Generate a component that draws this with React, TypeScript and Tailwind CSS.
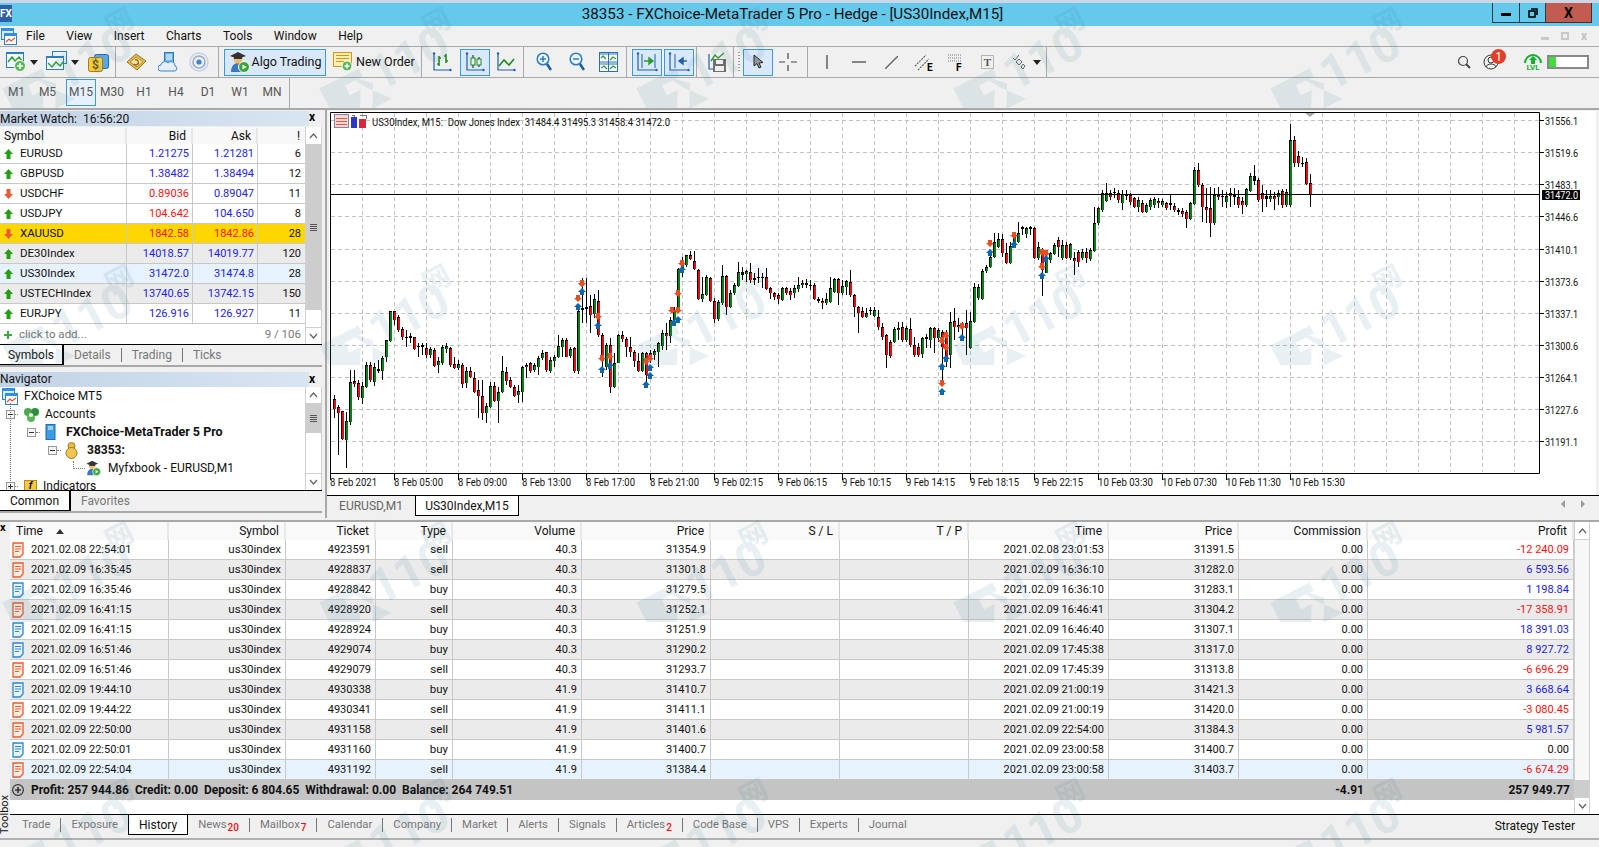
import React from 'react';

const FONT = { fontFamily: 'Roboto, "Liberation Sans", sans-serif' };

// candle data read off the chart: colour, body top, body bottom, wick top, wick bottom (3x px from y=110)
const CANDLES_A = `r868 898 855 925,r892 908 885 1035,r903 988 903 990,g933 990 905 1075,g817 935 780 945,r813 822 780 830,r820 860 810 870,g828 865 815 882,g765 830 755 835,r765 810 755 815,g770 815 760 828,d778 783 750 790,g743 782 738 810,g690 740 690 755,g604 692 602 695,r604 630 602 645,r622 660 615 665,r658 680 650 690,d680 684 660 710,d678 684 670 700,r682 716 680 720,d708 712 700 740,d706 710 700 735,r715 735 700 745,g716 735 710 745,r720 768 715 770,g754 765 740 790,g710 760 705 765,g708 718 700 730,r714 765 710 770,r762 775 742 778,g762 775 750 780,r765 822 760 835,g782 820 770 835,r782 800 770 805,r804 845 785 850,r841 858 810 925,r858 908 810 930,g888 910 880 938,g828 890 815 895,r828 872 815 875,g845 872 830 938,g784 845 738 850,r786 812 770 825,r810 830 800 835,r830 858 825 860,g844 854 825 878,g772 845 768 875,g765 772 760 805,r760 782 755 790,g765 780 758 785,g744 770 738 795,g730 745 720 750,r727 780 725 785,g750 782 740 788,g740 752 735 770,g708 740 675 745,g690 710 685 740,r690 740 685 742,g716 738 710 745,r715 782 712 790,g604 782 585 792,d595 600 505 640,d590 598 505 640,r588 616 555 668,g568 612 553 625,r574 676 540 680,r676 752 670 800,g705 770 700 780,r704 830 685 848,g760 830 730 835,g675 758 672 760,r676 686 662 695,r686 712 682 740,r712 726 682 740,r726 752 720 770,r752 782 730 785,g730 782 725 785,r730 795 725 830,r728 740 720 760,g724 734 718 750,g700 725 695 770,g668 708 660 720,r668 678 640 720,g630 678 620 700,g600 630 590 640,g478 600 475 610,g462 478 440 500,g436 466 434 470,r436 446 422 450,r454 476 422 480,r480 566 478 570,g552 566 500 575,g502 555 495 557,r505 572 500 575,r572 628 565 640,g577 628 570 632,g498 580 465 585,r498 590 495 615,g548 590 540 595,g524 550 520 555,g487 527 457 530,d487 494 470 510,g484 492 480 515,r487 510 460 520,d505 510 490 525,d502 505 475 520,d500 505 490 535,r502 537 475 540,r535 550 530 568,r550 560 545 570,r556 568 550 582,g535 570 530 572,r535 550 530 555,r543 554 535 570,g535 550 525 565,g526 536 500 545,g518 526 510 535,d518 524 508 535,d524 528 510 540,r526 568 520 570,d568 572 560 580,r573 580 565 597,g568 580 550 585`;
const CANDLES_B = `g535 575 500 580,g508 545 505 548,r508 550 505 585,g528 548 510 555,g514 530 510 555,r515 556 480 560,r556 592 552 620,r590 610 588 670,r603 620 590 625,g610 622 595 625,d600 604 590 615,g600 618 590 620,r622 652 600 660,r652 682 640 690,r675 735 672 775,r695 738 690 745,g656 695 650 700,g654 660 635 690,r650 690 635 695,g655 690 648 695,r658 705 625 710,r705 735 680 740,r710 735 700 742,g685 733 680 745,d680 686 672 715,g655 690 650 715,r655 685 650 730,g660 683 655 695,r665 710 660 820,r670 745 660 770,g635 735 605 775,r632 650 595 690,g645 650 625 665,d645 650 635 685,r640 655 600 735,g633 715 605 718,g530 635 520 640,g530 565 522 570,g482 568 478 570,g470 484 465 490,g442 470 420 475,g395 440 370 445,g388 410 370 415,r388 430 372 440,r430 458 400 462,g408 458 395 462,g380 410 372 412,g370 396 335 398,d352 356 348 375,g355 372 350 385,d352 356 348 375,r353 445 350 448,g412 445 395 450,r420 480 415 558,g445 488 430 490,g430 450 425 460,g405 432 400 435,r390 412 380 440,g405 445 390 450,r405 445 395 448,g402 445 398 450,r445 452 425 495,r427 455 420 472,g425 445 418 450,r425 445 415 460,g420 448 415 452,g340 422 290 425,g295 340 290 345,g250 300 240 305,g250 272 220 275,r248 260 240 270,d245 250 235 265,r250 270 240 280,g252 280 240 300,d255 258 240 270,r255 275 250 285,r265 290 260 295,g270 290 262 305,r278 305 270 310,g285 305 280 310,g270 290 265 300,g268 285 262 295,r272 280 265 295,g272 285 268 290,r280 295 275 300,d280 284 252 300,r288 300 280 305,d300 305 295 315,r302 312 295 320,r305 327 300 355,g280 326 275 330,g180 282 170 285,r180 225 160 230,r225 290 220 335,r290 300 235 340,r295 340 230 380,g255 340 235 345,r255 262 230 270,d258 262 240 290,g258 275 245 295,r250 258 235 290,d255 260 235 285,r260 285 240 295,r272 285 260 312,g237 285 235 290,g198 242 190 245,d198 212 165 225,r210 270 205 275,r248 268 225 305,d258 268 240 290,g258 268 240 275,r258 268 245 300,g250 262 240 285,r243 285 238 295,g245 285 238 290,g90 285 42 290,r90 160 78 170,r138 160 122 170,d158 162 140 172,r157 222 145 225,r220 252 192 292`;

function parseCandles(src: string, startX: number) {
  return src.split(',').map((s, i) => {
    const [a, b, c, d] = s.slice(1).split(' ').map(Number);
    return {
      x: startX + i * 4,
      kind: s[0],
      top: Math.round(110 + a / 3),
      bottom: Math.round(110 + b / 3),
      hi: Math.round(110 + c / 3),
      lo: Math.round(110 + d / 3),
    };
  });
}

const candles = [...parseCandles(CANDLES_A, 334), ...parseCandles(CANDLES_B, 830)];

const sellMarks = [[582, 283], [582, 283], [578, 298], [598, 316], [602, 358], [610, 356], [646, 361], [650, 358], [678, 293], [678, 310], [682, 263], [672, 310], [942, 383], [942, 340], [942, 340], [946, 335], [946, 347], [962, 326], [990, 243], [1014, 235], [1042, 252], [1046, 253], [1042, 266]];
const buyMarks = [[578, 307], [582, 292], [598, 326], [602, 370], [610, 366], [646, 385], [650, 376], [650, 368], [678, 320], [674, 323], [682, 270], [942, 392], [942, 367], [946, 359], [962, 338], [990, 253], [1014, 245], [1046, 259], [1042, 276]];

const priceLabels = [
  ['31556.1', 120.5], ['31519.6', 152.5], ['31483.1', 184.5], ['31446.6', 216.5], ['31410.1', 249.5], ['31373.6', 281.5],
  ['31337.1', 313.5], ['31300.6', 345.5], ['31264.1', 377.5], ['31227.6', 409.5], ['31191.1', 441.5],
] as const;

const timeLabels = [
  ['8 Feb 2021', 330, 47], ['8 Feb 05:00', 394, 49], ['8 Feb 09:00', 458, 49], ['8 Feb 13:00', 522, 49], ['8 Feb 17:00', 586, 49], ['8 Feb 21:00', 650, 49],
  ['9 Feb 02:15', 714, 49], ['9 Feb 06:15', 778, 49], ['9 Feb 10:15', 842, 49], ['9 Feb 14:15', 906, 49], ['9 Feb 18:15', 970, 49], ['9 Feb 22:15', 1034, 49],
  ['10 Feb 03:30', 1098, 55], ['10 Feb 07:30', 1162, 55], ['10 Feb 11:30', 1226, 55], ['10 Feb 15:30', 1290, 55],
] as const;

const vGrid = Array.from({ length: 38 }, (_, i) => 362.5 + i * 32);

const marketRows = [
  { s: 'EURUSD', b: '1.21275', a: '1.21281', n: '6', up: true, bc: 'text-[#2222ee]', ac: 'text-[#2222ee]', bg: 'bg-white' },
  { s: 'GBPUSD', b: '1.38482', a: '1.38494', n: '12', up: true, bc: 'text-[#2222ee]', ac: 'text-[#2222ee]', bg: 'bg-white' },
  { s: 'USDCHF', b: '0.89036', a: '0.89047', n: '11', up: false, bc: 'text-[#ff1111]', ac: 'text-[#2222ee]', bg: 'bg-white' },
  { s: 'USDJPY', b: '104.642', a: '104.650', n: '8', up: true, bc: 'text-[#ff1111]', ac: 'text-[#2222ee]', bg: 'bg-white' },
  { s: 'XAUUSD', b: '1842.58', a: '1842.86', n: '28', up: false, bc: 'text-[#ff1111]', ac: 'text-[#ff1111]', bg: 'bg-[#ffd700]' },
  { s: 'DE30Index', b: '14018.57', a: '14019.77', n: '120', up: true, bc: 'text-[#2222ee]', ac: 'text-[#2222ee]', bg: 'bg-[#ebebeb]' },
  { s: 'US30Index', b: '31472.0', a: '31474.8', n: '28', up: true, bc: 'text-[#2222ee]', ac: 'text-[#2222ee]', bg: 'bg-[#e6f2fd]' },
  { s: 'USTECHIndex', b: '13740.65', a: '13742.15', n: '150', up: true, bc: 'text-[#2222ee]', ac: 'text-[#2222ee]', bg: 'bg-[#ebebeb]' },
  { s: 'EURJPY', b: '126.916', a: '126.927', n: '11', up: true, bc: 'text-[#2222ee]', ac: 'text-[#2222ee]', bg: 'bg-white' },
];

const historyRows = [
  ['2021.02.08 22:54:01', '4923591', 'sell', '40.3', '31354.9', '2021.02.08 23:01:53', '31391.5', '-12 240.09'],
  ['2021.02.09 16:35:45', '4928837', 'sell', '40.3', '31301.8', '2021.02.09 16:36:10', '31282.0', '6 593.56'],
  ['2021.02.09 16:35:46', '4928842', 'buy', '40.3', '31279.5', '2021.02.09 16:36:10', '31283.1', '1 198.84'],
  ['2021.02.09 16:41:15', '4928920', 'sell', '40.3', '31252.1', '2021.02.09 16:46:41', '31304.2', '-17 358.91'],
  ['2021.02.09 16:41:15', '4928924', 'buy', '40.3', '31251.9', '2021.02.09 16:46:40', '31307.1', '18 391.03'],
  ['2021.02.09 16:51:46', '4929074', 'buy', '40.3', '31290.2', '2021.02.09 17:45:38', '31317.0', '8 927.72'],
  ['2021.02.09 16:51:46', '4929079', 'sell', '40.3', '31293.7', '2021.02.09 17:45:39', '31313.8', '-6 696.29'],
  ['2021.02.09 19:44:10', '4930338', 'buy', '41.9', '31410.7', '2021.02.09 21:00:19', '31421.3', '3 668.64'],
  ['2021.02.09 19:44:22', '4930341', 'sell', '41.9', '31411.1', '2021.02.09 21:00:19', '31420.0', '-3 080.45'],
  ['2021.02.09 22:50:00', '4931158', 'sell', '41.9', '31401.6', '2021.02.09 22:54:00', '31384.3', '5 981.57'],
  ['2021.02.09 22:50:01', '4931160', 'buy', '41.9', '31400.7', '2021.02.09 23:00:58', '31400.7', '0.00'],
  ['2021.02.09 22:54:04', '4931192', 'sell', '41.9', '31384.4', '2021.02.09 23:00:58', '31403.7', '-6 674.29'],
];

const toolboxTabs = [
  { t: 'Trade' }, { t: 'Exposure', noSep: true }, { t: 'History', active: true }, { t: 'News', sup: '20' }, { t: 'Mailbox', sup: '7' },
  { t: 'Calendar' }, { t: 'Company' }, { t: 'Market' }, { t: 'Alerts' }, { t: 'Signals' }, { t: 'Articles', sup: '2' },
  { t: 'Code Base' }, { t: 'VPS' }, { t: 'Experts' }, { t: 'Journal', noSep: true },
];

const COLS = 'grid grid-cols-[159px_117px_90px_77px_129px_129px_129px_129px_140px_130px_129px_206px]';

function Watermark() {
  return (
    <svg width="140" height="104" viewBox="0 0 140 104" className="opacity-[0.11]">
      <g transform="translate(0 8) rotate(-27 70 50)" fill="#3f7f97">
        <path d="M-4 42 L40 42 L40 51 L20 51 L20 62 L32 62 L20 84 L-4 84 Z" />
        <path d="M26 42 L46 62 L34 84 L56 84 L38 62 Z" />
        <text x="48" y="72" fontSize="48" fontWeight="700" fontFamily="Roboto, sans-serif">110</text>
        <text x="116" y="46" fontSize="28" fontWeight="700" fontFamily='"Noto Sans CJK SC", sans-serif'>网</text>
      </g>
    </svg>
  );
}

function ArrowDot({ up }: { up: boolean }) {
  return (
    <svg className="shrink-0" width="9" height="10" viewBox="0 0 9 10">
      {up ? (
        <path d="M4.5 0 L9 5 L6.5 5 L6.5 10 L2.5 10 L2.5 5 L0 5 Z" fill="#22a010" />
      ) : (
        <path d="M4.5 10 L9 5 L6.5 5 L6.5 0 L2.5 0 L2.5 5 L0 5 Z" fill="#ea5a32" />
      )}
    </svg>
  );
}

function Chevron({ up }: { up: boolean }) {
  return (
    <svg width="9" height="6" viewBox="0 0 9 6" fill="none" stroke="#606060" strokeWidth="1.2">
      <path d={up ? 'M1 5 L4.5 1 L8 5' : 'M1 1 L4.5 5 L8 1'} />
    </svg>
  );
}

function CloseX() {
  return <span className="text-[12px] font-bold leading-none text-black">x</span>;
}

function Grip() {
  return (
    <span className="flex flex-col gap-[1px]">
      <span className="h-[1px] w-[7px] bg-[#555]" />
      <span className="h-[1px] w-[7px] bg-[#555]" />
      <span className="h-[1px] w-[7px] bg-[#555]" />
      <span className="h-[1px] w-[7px] bg-[#555]" />
    </span>
  );
}

function WindowIcon() {
  return (
    <svg className="shrink-0" width="16" height="17" viewBox="0 0 16 17">
      <rect x="0.5" y="0.5" width="12" height="11" fill="#d9ecfb" stroke="#2f7fc8" />
      <rect x="0" y="0" width="13" height="3" fill="#2f8fe0" />
      <rect x="3.5" y="5.5" width="12" height="11" fill="#fff" stroke="#2f7fc8" />
      <rect x="3" y="5" width="13" height="3" fill="#2f8fe0" />
      <path d="M5 14 L8 11 L10 13 L14 10" fill="none" stroke="#e0503a" strokeWidth="1.2" />
    </svg>
  );
}

function NewChartIcon({ double }: { double?: boolean }) {
  return (
    <svg width="22" height="22" viewBox="0 0 22 22">
      {double && <rect x="6.5" y="0.5" width="14" height="12" fill="#e8f3fc" stroke="#2b7cc0" />}
      <rect x="0.5" y={double ? 5.5 : 1.5} width="17" height={double ? 13 : 15} fill="#f4f9fd" stroke="#2b7cc0" />
      <rect x="0" y={double ? 5 : 1} width="18" height="2" fill="#2b7cc0" />
      <path d={double ? 'M2 12 L6 16 L10 11 L14 15 L17 11' : 'M2 11 L6 6 L9 10 L13 6 L16 10'} fill="none" stroke="#2e9b2e" strokeWidth="1.4" />
      {!double && <circle cx="14" cy="15" r="5.5" fill="#55b755" stroke="#fff" />}
      {!double && <path d="M14 12 V18 M11 15 H17" stroke="#fff" strokeWidth="1.6" />}
    </svg>
  );
}

function GoldIcon() {
  return (
    <svg width="21" height="20" viewBox="0 0 21 20">
      <rect x="6.5" y="2.5" width="14" height="14" rx="2" fill="#5aa7e8" stroke="#2169b0" />
      <rect x="0.5" y="5.5" width="14" height="14" rx="2" fill="#f6cd3c" stroke="#a67a10" />
      <text x="7.5" y="17" textAnchor="middle" fontSize="12" fontWeight="700" fill="#7a5a08">$</text>
    </svg>
  );
}

function FolderGoldIcon() {
  return (
    <svg width="21" height="20" viewBox="0 0 21 20">
      <path d="M1 10 L10 2 L20 9 L11 18 Z" fill="#e5bb55" stroke="#9a7520" />
      <path d="M4 10 L10 5 L17 9.5 L11 15 Z" fill="#f5e0a0" stroke="#b28a28" />
      <path d="M9 8 A2.5 2.5 0 1 1 8 12" fill="none" stroke="#8a6a18" strokeWidth="1.3" />
    </svg>
  );
}

function CloudIcon() {
  return (
    <svg width="20" height="20" viewBox="0 0 20 20">
      <rect x="6.5" y="0.5" width="9" height="11" fill="#6bb2ea" stroke="#2a78c0" />
      <path d="M8 3 H14 M8 5 H14 M8 7 H14" stroke="#fff" />
      <path d="M3 19 A3 3 0 0 1 3 13 A4 4 0 0 1 10 11 A4 4 0 0 1 17 14 A2.6 2.6 0 0 1 17 19 Z" fill="#e3f0fb" stroke="#3f87c8" />
    </svg>
  );
}

function SignalIcon() {
  return (
    <svg width="20" height="20" viewBox="0 0 20 20" fill="none">
      <circle cx="10" cy="10" r="9" stroke="#c5d3e6" strokeWidth="1.5" />
      <circle cx="10" cy="10" r="6" stroke="#8fa9cf" strokeWidth="1.5" />
      <circle cx="10" cy="10" r="2.6" fill="#3f7fd0" />
    </svg>
  );
}

function AlgoIcon({ small }: { small?: boolean }) {
  const size = small ? 16 : 22;
  return (
    <svg className="shrink-0" width={size} height={size} viewBox="0 0 22 22">
      <path d="M3 21 C3 14 7 12 10 12 C14 12 17 14 17 21 Z" fill="#3f78c2" />
      <circle cx="10" cy="8" r="4.5" fill="#f0b96f" />
      <path d="M2 5 L10 1 L18 5 L10 8 Z" fill="#333" />
      <path d="M6 6 H14 V8 H6 Z" fill="#333" />
      <circle cx="16" cy="16" r="5.5" fill="#3aa63a" stroke="#fff" />
      <path d="M14.5 13.5 L18.5 16 L14.5 18.5 Z" fill="#fff" />
    </svg>
  );
}

function NewOrderIcon() {
  return (
    <svg className="shrink-0" width="20" height="20" viewBox="0 0 20 20">
      <rect x="0.5" y="0.5" width="18" height="14" fill="#fbeeb0" stroke="#c99a1c" />
      <path d="M3 3.5 H16 M3 6.5 H16 M3 9.5 H12" stroke="#c99a1c" />
      <circle cx="14" cy="14" r="5" fill="#57b757" stroke="#fff" />
      <path d="M14 11.5 V16.5 M11.5 14 H16.5" stroke="#fff" strokeWidth="1.5" />
    </svg>
  );
}

function Axes({ children, w = 20 }: { children?: React.ReactNode; w?: number }) {
  return (
    <svg width={w} height="20" viewBox={`0 0 ${w} 20`}>
      <path d={`M2 1 V18 H${w - 1}`} fill="none" stroke="#1f5fb0" strokeWidth="1.2" />
      <circle cx="2" cy="1.5" r="1.2" fill="#1f5fb0" />
      <circle cx={w - 1.5} cy="18" r="1.2" fill="#1f5fb0" />
      {children}
    </svg>
  );
}

function MagnifierIcon({ plus }: { plus?: boolean }) {
  return (
    <svg width="16" height="20" viewBox="0 0 16 20">
      <circle cx="7" cy="7" r="5.8" fill="#eef6fd" stroke="#2a7cc4" strokeWidth="1.5" />
      <path d="M4 7 H10" stroke="#2a7cc4" strokeWidth="1.5" />
      {plus && <path d="M7 4 V10" stroke="#2a7cc4" strokeWidth="1.5" />}
      <path d="M11 12 L15 18" stroke="#1d5d9a" strokeWidth="2.6" />
    </svg>
  );
}

function TilesIcon() {
  return (
    <svg width="19" height="20" viewBox="0 0 19 20">
      <rect x="0.5" y="0.5" width="18" height="19" fill="#fff" stroke="#2a6fb5" />
      <path d="M0 2 H19 M0 10 H19 M0 12 H19 M9.5 0 V20" stroke="#2a6fb5" />
      <path d="M2 6 L4 4 L7 7 M11 8 L14 5 L17 7 M2 16 L5 14 L8 17 M11 17 L14 14 L17 16" fill="none" stroke="#2e9b2e" strokeWidth="1.3" />
    </svg>
  );
}

function ToolbarSep() {
  return <span className="mx-[4px] h-[30px] w-[1px] bg-[#a8a8a8]" />;
}

function SelBtn({ children, w }: { children: React.ReactNode; w: string }) {
  return (
    <span className={`flex h-[27px] items-center justify-center border border-[#3a9bd9] bg-[#d9e9fb] ${w}`}>{children}</span>
  );
}

function Caret() {
  return <span className="block h-0 w-0 border-x-[4px] border-t-[5px] border-x-transparent border-t-[#222]" />;
}

function Toolbar() {
  return (
    <div className="flex h-[32px] shrink-0 items-center border-y border-[#a8a8a8] bg-[#f0f0f0]">
      <div className="flex h-full w-[1047px] shrink-0 items-center border-r border-[#a8a8a8] [&>*]:shrink-0">
        <span className="ml-[6px] w-[24px]"><NewChartIcon /></span>
        <span className="w-[16px]"><Caret /></span>
        <span className="w-[25px]"><NewChartIcon double /></span>
        <span className="w-[17px]"><Caret /></span>
        <span className="w-[23px]"><GoldIcon /></span>
        <ToolbarSep />
        <span className="ml-[6px] flex w-[88px] items-center gap-[11px]"><FolderGoldIcon /><CloudIcon /><SignalIcon /></span>
        <ToolbarSep />
        <SelBtn w="w-[102px] gap-[1px] ml-[1px]"><AlgoIcon /><span className="whitespace-nowrap text-[12.5px] text-[#111]">Algo Trading</span></SelBtn>
        <span className="ml-[7px] flex w-[84px] items-center gap-[3px]"><NewOrderIcon /><span className="whitespace-nowrap text-[12.5px] text-[#111]">New Order</span></span>
        <ToolbarSep />
        <span className="ml-[6px] w-[28px]">
          <Axes><path d="M7 4 V14 M5 12 H7 M7 6 H9 M14 2 V11 M12 4 H14 M14 9 H16" fill="none" stroke="#1e8c1e" strokeWidth="1.6" /></Axes>
        </span>
        <SelBtn w="w-[30px]">
          <Axes><path d="M8 3 V16 M14 5 V15" stroke="#111" /><rect x="6" y="6" width="4" height="7" fill="#e9f4ea" stroke="#1e8c1e" /><rect x="12" y="7" width="4" height="6" fill="#e9f4ea" stroke="#1e8c1e" /></Axes>
        </SelBtn>
        <span className="ml-[6px] w-[23px]">
          <Axes><path d="M3 14 L8 8 L13 13 L18 7" fill="none" stroke="#1e8c1e" strokeWidth="1.6" /></Axes>
        </span>
        <ToolbarSep />
        <span className="ml-[8px] w-[33px]"><MagnifierIcon plus /></span>
        <span className="w-[30px]"><MagnifierIcon /></span>
        <span className="w-[23px]"><TilesIcon /></span>
        <ToolbarSep />
        <SelBtn w="w-[30px] ml-[1px]">
          <Axes w={22}><path d="M6 2 V16 M19 2 V16" stroke="#1f5fb0" /><path d="M8 9 H14 M13 6 V12 L17 9 Z" fill="#2e9b2e" stroke="#2e9b2e" strokeWidth="1.4" /></Axes>
        </SelBtn>
        <span className="w-[2px]" />
        <SelBtn w="w-[30px]">
          <Axes w={22}><path d="M7 2 V16" stroke="#1f5fb0" /><path d="M19 9 H15 M15 6 V12 L11 9 Z" fill="#1f5fb0" stroke="#1f5fb0" strokeWidth="1.4" /></Axes>
        </SelBtn>
        <span className="mx-[2px] h-[30px] w-[1px] bg-[#a8a8a8]" />
        <span className="ml-[8px] w-[22px]">
          <svg width="19" height="20" viewBox="0 0 19 20">
            <path d="M2 2 V17 H11" fill="none" stroke="#1f5fb0" strokeWidth="1.2" />
            <path d="M4 9 L8 3 L11 6 L17 1" fill="none" stroke="#2e9b2e" strokeWidth="1.4" />
            <rect x="6" y="7" width="13" height="13" fill="#6e6e6e" />
            <rect x="9" y="8" width="7" height="4" fill="#eee" />
            <rect x="8" y="14" width="9" height="5" fill="#eee" />
          </svg>
        </span>
        <ToolbarSep />
        <span className="mr-[1px] h-[20px] w-[2px] bg-[repeating-linear-gradient(#999_0_1px,transparent_1px_3px)]" />
        <SelBtn w="w-[30px] ml-[2px]">
          <svg width="12" height="16" viewBox="0 0 12 16"><path d="M2 1 L2 12 L5 9.5 L7 14 L9 13 L7 9 L11 8.5 Z" fill="#9a9a9a" stroke="#222" /></svg>
        </SelBtn>
        <span className="ml-[6px] w-[24px]">
          <svg width="18" height="18" viewBox="0 0 18 18"><path d="M9 0 V6 M9 12 V18 M0 9 H6 M12 9 H18" stroke="#444" strokeWidth="1.2" /></svg>
        </span>
        <ToolbarSep />
        <span className="ml-[14px] w-[26px]"><svg width="2" height="14"><path d="M1 0 V14" stroke="#555" strokeWidth="1.4" /></svg></span>
        <span className="w-[33px]"><svg width="14" height="2"><path d="M0 1 H14" stroke="#555" strokeWidth="1.4" /></svg></span>
        <span className="w-[29px]"><svg width="13" height="13"><path d="M0 13 L13 0" stroke="#666" strokeWidth="1.4" /></svg></span>
        <span className="w-[34px]">
          <svg width="19" height="20" viewBox="0 0 19 20">
            <path d="M1 14 L12 3 M4 18 L15 7" stroke="#666" strokeWidth="1.2" strokeDasharray="2 1" fill="none" />
            <text x="13" y="19" fontSize="10" fontWeight="700" fill="#000">E</text>
          </svg>
        </span>
        <span className="w-[33px]">
          <svg width="15" height="20" viewBox="0 0 15 20">
            <path d="M0 3 H13 M0 6 H13 M0 9 H13" stroke="#777" strokeDasharray="1 1" />
            <text x="8" y="19" fontSize="10" fontWeight="700" fill="#000">F</text>
          </svg>
        </span>
        <span className="w-[31px]">
          <svg width="13" height="14" viewBox="0 0 13 14">
            <rect x="0.5" y="0.5" width="12" height="13" fill="none" stroke="#777" strokeDasharray="1 1" />
            <text x="6.5" y="11" textAnchor="middle" fontSize="11" fontWeight="700" fill="#555" fontFamily="Liberation Serif, serif">T</text>
          </svg>
        </span>
        <span className="w-[21px]">
          <svg width="14" height="16" viewBox="0 0 14 16" fill="none" stroke="#666">
            <path d="M1 4 L3 6 L7 1" />
            <path d="M4 8 L7 11 L10 8 L7 5 Z" />
            <path d="M9 13 L11 15 L13 12 L11 10 Z" />
          </svg>
        </span>
        <Caret />
      </div>
      <div className="flex flex-1 items-center">
        <span className="ml-[410px] w-[26px]">
          <svg width="14" height="14" viewBox="0 0 14 14" fill="none" stroke="#444"><circle cx="6" cy="6" r="4.5" strokeWidth="1.2" /><path d="M9 9 L13 13" strokeWidth="2" /></svg>
        </span>
        <span className="relative w-[36px]">
          <svg width="16" height="16" viewBox="0 0 16 16" fill="none" stroke="#333"><circle cx="8" cy="8" r="7" /><circle cx="8" cy="6" r="3" /><path d="M3 13 C4 9 12 9 13 13" /></svg>
          <span className="absolute left-[8px] top-[-5px] flex h-[15px] w-[15px] items-center justify-center rounded-full bg-[#e43d28] text-[12px] text-white">1</span>
        </span>
        <span className="flex w-[28px] flex-col items-center leading-none">
          <svg width="18" height="11" viewBox="0 0 18 11"><path d="M1 10 A8 8 0 0 1 17 10" fill="none" stroke="#15b030" strokeWidth="2" /><path d="M9 3 L13 7 H11 V11 H7 V7 H5 Z" fill="#15b030" /></svg>
          <span className="text-[8px] font-bold text-[#15b030]">LVL</span>
        </span>
        <span className="flex h-[14px] w-[42px] border-2 border-[#888] bg-white">
          <span className="w-[7px] bg-[#42dc3c]" />
        </span>
      </div>
    </div>
  );
}

function MarketWatch() {
  return (
    <div className="flex h-[257px] shrink-0 flex-col border-b-2 border-[#a8a8a8]">
      <div className="flex h-[17px] shrink-0 items-start pt-[1px]">
        <div className="flex h-[15px] w-[309px] items-center bg-gradient-to-r from-[#c2d3e6] to-[#d8e5f2] text-[12px] leading-none text-[#111]">Market Watch:&nbsp; 16:56:20</div>
        <span className="flex flex-1 justify-center pr-[7px]"><CloseX /></span>
      </div>
      <div className="flex h-[217px] shrink-0">
        <div className="w-[305px] bg-white">
          <div className="grid h-[17px] grid-cols-[127px_66px_65px_47px] items-center bg-[#f8f8f8] text-[12px] leading-[16px] text-[#111]">
            <span className="pl-[4px] border-r-2 border-[#e8e8e8]">Symbol</span>
            <span className="pr-[5px] text-right border-r-2 border-[#e8e8e8]">Bid</span>
            <span className="pr-[5px] text-right border-r-2 border-[#e8e8e8]">Ask</span>
            <span className="pr-[5px] text-right">!</span>
          </div>
          {marketRows.map((r) => (
            <div key={r.s} className={`grid h-[20px] grid-cols-[127px_66px_65px_47px] items-center border-b border-[#c8c8c8] text-[11px] ${r.bg}`}>
              <span className="flex h-full items-center gap-[7px] border-r border-[#c8c8c8] pl-[4px] pt-[1px] text-[11.5px] text-[#111]"><ArrowDot up={r.up} />{r.s}</span>
              <span className={`flex h-full items-center justify-end border-r border-[#c8c8c8] pr-[3px] pt-[2px] ${r.bc}`}>{r.b}</span>
              <span className={`flex h-full items-center justify-end border-r border-[#c8c8c8] pr-[3px] pt-[2px] ${r.ac}`}>{r.a}</span>
              <span className="pr-[4px] pt-[2px] text-right text-[#111]">{r.n}</span>
            </div>
          ))}
          <div className="flex h-[20px] items-center justify-between px-[4px] pt-[1px] text-[11.5px] text-[#777]">
            <span className="flex items-center gap-[7px]">
              <svg width="8" height="8" viewBox="0 0 8 8"><path d="M4 0 V8 M0 4 H8" stroke="#3aa83a" strokeWidth="2" /></svg>
              click to add...
            </span>
            <span>9 / 106</span>
          </div>
        </div>
        <div className="flex w-[17px] flex-col bg-white border-x border-[#d0d0d0]">
          <span className="flex h-[17px] items-center justify-center"><Chevron up /></span>
          <span className="flex h-[166px] items-center justify-center bg-[#cdcdcd]"><Grip /></span>
          <span className="flex-1" />
          <span className="flex h-[17px] items-center justify-center border-t border-[#d0d0d0]"><Chevron up={false} /></span>
        </div>
      </div>
      <div className="flex h-[21px] w-[322px] shrink-0 items-start border-t border-black bg-[#f0f0f0] text-[12px] text-[#777]">
        <span className="flex h-[20px] w-[64px] items-center justify-center border-b border-r-2 border-black bg-white text-[#111]">Symbols</span>
        <span className="mt-[3px] border-r border-[#777] px-[10px] leading-[14px]">Details</span>
        <span className="mt-[3px] border-r border-[#777] px-[10px] leading-[14px]">Trading</span>
        <span className="mt-[3px] px-[10px] leading-[14px]">Ticks</span>
      </div>
    </div>
  );
}

function TreeBox({ plus }: { plus?: boolean }) {
  return (
    <span className="flex h-[9px] w-[9px] shrink-0 items-center justify-center border border-[#999] bg-[#f4f4f4]">
      <span className="relative h-[1px] w-[5px] bg-[#333]">
        {plus && <span className="absolute left-[2px] top-[-2px] h-[5px] w-[1px] bg-[#333]" />}
      </span>
    </span>
  );
}

function Dots({ w }: { w: string }) {
  return <span className={`h-0 border-t border-dotted border-[#777] ${w}`} />;
}

function Navigator() {
  return (
    <div className="mt-[4px] flex h-[142px] shrink-0 flex-col border-b-2 border-[#a8a8a8]">
      <div className="flex h-[16px] shrink-0 items-center">
        <div className="flex h-[15px] w-[309px] items-center bg-gradient-to-r from-[#c2d3e6] to-[#d8e5f2] text-[12px] leading-none text-[#111]">Navigator</div>
        <span className="flex flex-1 justify-center pr-[7px]"><CloseX /></span>
      </div>
      <div className="flex h-[103px] shrink-0">
        <div className="relative w-[305px] overflow-hidden bg-white text-[12px] leading-[18px] text-[#111]">
          <span className="absolute left-[10px] top-[16px] h-[80px] border-l border-dotted border-[#777]" />
          <div className="flex h-[18px] items-center gap-[6px] pl-[2px]"><WindowIcon />FXChoice MT5</div>
          <div className="flex h-[18px] items-center pl-[6px]">
            <TreeBox /><Dots w="w-[3px]" />
            <svg className="mx-[5px]" width="17" height="15" viewBox="0 0 17 15"><circle cx="5" cy="5" r="4" fill="#4aa94a" /><circle cx="12" cy="5" r="4" fill="#2e8f3a" /><circle cx="8" cy="11" r="4" fill="#58b858" /><circle cx="8" cy="8" r="2" fill="#fff" /></svg>
            Accounts
          </div>
          <div className="flex h-[18px] items-center pl-[27px] text-[12.5px] font-bold">
            <TreeBox /><Dots w="w-[4px]" />
            <svg className="mx-[4px] shrink-0" width="13" height="16" viewBox="0 0 13 16"><rect x="2" y="0.5" width="9" height="15" fill="#3d9be5" stroke="#1e6fb5" /><path d="M4 3 H9 M4 5 H9" stroke="#fff" /></svg>
            <span className="pl-[5px]">FXChoice-MetaTrader 5 Pro</span>
          </div>
          <div className="flex h-[18px] items-center pl-[48px] font-bold">
            <TreeBox /><Dots w="w-[4px]" />
            <svg className="mx-[3px] shrink-0" width="15" height="17" viewBox="0 0 15 17"><circle cx="7.5" cy="4" r="3.5" fill="#e8bd48" stroke="#a07a18" /><circle cx="7.5" cy="11" r="5.5" fill="#eec655" stroke="#a07a18" /></svg>
            <span className="pl-[5px]">38353:</span>
          </div>
          <div className="flex h-[18px] items-center pl-[73px]">
            <span className="mb-[6px] h-[8px] w-[12px] border-b border-l border-dotted border-[#777]" />
            <AlgoIcon small />
            <span className="pl-[7px]">Myfxbook - EURUSD,M1</span>
          </div>
          <div className="flex h-[18px] items-center pl-[6px]">
            <TreeBox plus /><Dots w="w-[3px]" />
            <span className="mx-[6px] flex h-[13px] w-[13px] items-center justify-center border border-[#b98a18] bg-[#f3c93e] text-[10px] italic font-bold">f</span>
            Indicators
          </div>
        </div>
        <div className="flex w-[17px] flex-col border-x border-[#d0d0d0] bg-white">
          <span className="flex h-[17px] items-center justify-center border-b border-[#d0d0d0]"><Chevron up /></span>
          <span className="flex h-[29px] items-center justify-center bg-[#cdcdcd]"><Grip /></span>
          <span className="flex-1" />
          <span className="flex h-[17px] items-center justify-center border-t border-[#d0d0d0]"><Chevron up={false} /></span>
        </div>
      </div>
      <div className="flex h-[21px] w-[322px] shrink-0 items-start border-t border-black bg-[#f0f0f0] text-[12px] text-[#777]">
        <span className="flex h-[20px] w-[71px] items-center justify-center border-b border-r-2 border-black bg-white text-[#111]">Common</span>
        <span className="mt-[3px] px-[10px] leading-[14px]">Favorites</span>
      </div>
    </div>
  );
}

function Chart() {
  return (
    <svg className="block h-[385px] w-[1272px] shrink-0" viewBox="327 110 1272 385" fontFamily="Roboto, sans-serif">
      <rect x="327" y="110" width="1272" height="385" fill="#f0f0f0" />
      <rect x="329" y="111" width="1267" height="384" fill="#fff" />
      {priceLabels.map(([, y]) => (
        <path key={y} d={`M331 ${y} H1539`} stroke="#c2c2c2" strokeDasharray="4 3" />
      ))}
      {vGrid.filter((x) => x < 1539).map((x) => (
        <path key={x} d={`M${x} 113 V472`} stroke="#c2c2c2" strokeDasharray="4 3" />
      ))}
      <path d="M330.5 112.5 H1539.5 V473.5 H330.5 Z" fill="none" stroke="#000" />
      <path d="M1305 113 H1315 L1310 117 Z" fill="#a8a8a8" />
      {candles.map((c) => (
        <g key={c.x} shapeRendering="crispEdges">
          <rect x={c.x} y={c.hi} width="1" height={Math.max(1, c.lo - c.hi)} fill="#000" />
          {c.kind === 'd' ? (
            <rect x={c.x - 1} y={c.top} width="3" height={Math.max(1, c.bottom - c.top)} fill="#000" />
          ) : (
            <>
              <rect x={c.x - 1} y={c.top} width="3" height={Math.max(2, c.bottom - c.top)} fill="#000" />
              <rect x={c.x} y={c.top + 1} width="2" height={Math.max(1, c.bottom - c.top - 1)} fill={c.kind === 'g' ? '#0a7f12' : '#e60d0d'} />
            </>
          )}
        </g>
      ))}
      {sellMarks.map(([x, y], i) => (
        <path key={`s${i}`} d={`M${x} ${y + 4} L${x - 4} ${y} H${x - 2} V${y - 3} H${x + 2} V${y} H${x + 4} Z`} fill="#e84e22" />
      ))}
      {buyMarks.map(([x, y], i) => (
        <path key={`b${i}`} d={`M${x} ${y - 4} L${x - 4} ${y} H${x - 2} V${y + 3} H${x + 2} V${y} H${x + 4} Z`} fill="#0a66b0" />
      ))}
      <path d="M331 194.5 H1539" stroke="#000" />
      {priceLabels.map(([t, y]) => (
        <g key={t}>
          <path d={`M1539 ${y} H1544`} stroke="#000" />
          <text x="1545" y={y + 4} fontSize="11" fill="#111" textLength="33" lengthAdjust="spacingAndGlyphs">{t}</text>
        </g>
      ))}
      <path d="M1542 190 H1580 V200 H1542 Z" fill="#000" />
      <text x="1545" y="199" fontSize="11" fill="#fff" textLength="33" lengthAdjust="spacingAndGlyphs">31472.0</text>
      {timeLabels.map(([t, x, w]) => (
        <g key={t}>
          <path d={`M${x + 0.5} 473 V480`} stroke="#000" />
          <text x={x} y="486" fontSize="11" fill="#111" textLength={w} lengthAdjust="spacingAndGlyphs">{t}</text>
        </g>
      ))}
      <g shapeRendering="crispEdges">
        <rect x="334.5" y="114.5" width="14" height="13" fill="#f5d6d2" stroke="#8a7faa" />
        <path d="M336 118 H347 M336 121 H347 M336 124 H347" stroke="#e05a48" />
        <rect x="351" y="117" width="6" height="11" fill="#2a36c4" />
        <rect x="359" y="119" width="7" height="9" fill="#d6283a" />
        <path d="M352 115 H354 V117 M360 115 H366 V119" stroke="#777" fill="none" />
      </g>
      <text x="372" y="126" fontSize="11" fill="#111" xmlSpace="preserve" textLength="298" lengthAdjust="spacingAndGlyphs">US30Index, M15:  Dow Jones Index  31484.4 31495.3 31458.4 31472.0</text>
    </svg>
  );
}

function DocIcon({ sell }: { sell: boolean }) {
  const stroke = sell ? '#ee5a2a' : '#2a86cf';
  return (
    <svg className="shrink-0" width="12" height="16" viewBox="0 0 12 16">
      <path d="M1 1 H11 V12 L8 15 H1 Z" fill={sell ? '#fdeee6' : '#e8f3fc'} stroke={stroke} strokeWidth="1.3" />
      <path d="M3 4.5 H9 M3 7 H9 M3 9.5 H7" stroke={stroke} strokeWidth="1.2" />
    </svg>
  );
}

function HistoryTable() {
  const head = ['Symbol', 'Ticket', 'Type', 'Volume', 'Price', 'S / L', 'T / P', 'Time', 'Price', 'Commission', 'Profit'];
  return (
    <div className="flex min-w-0 flex-1 flex-col">
      <div className="flex h-[292px] shrink-0">
        <div className="w-[1564px] text-[11px]">
          <div className={`${COLS} h-[18px] items-center bg-[#f9f9f9] text-[12px] text-[#111]`}>
            <span className="flex items-center gap-[13px] border-r-2 border-[#e8e8e8] pl-[6px]">Time
              <span className="h-0 w-0 border-x-[4px] border-b-[5px] border-x-transparent border-b-[#333]" />
            </span>
            {head.map((h, i) => (
              <span key={i} className="border-r-2 border-[#e8e8e8] pr-[5px] text-right">{h}</span>
            ))}
          </div>
          {historyRows.map((r, i) => {
            const sell = r[2] === 'sell';
            const bg = i === 11 ? 'bg-[#e6f2fd]' : i % 2 === 1 ? 'bg-[#ebebeb]' : 'bg-white';
            const profit = r[7];
            const pc = profit === '0.00' ? 'text-[#111]' : profit.startsWith('-') ? 'text-[#ff1111]' : 'text-[#1a1aee]';
            const cell = 'flex h-full items-center justify-end border-r border-[#c8c8c8] pr-[4px] pt-[2px]';
            const cellWide = 'flex h-full items-center justify-end border-r border-[#c8c8c8] pr-[4px] pt-[1px] text-[11.5px]';
            return (
              <div key={i} className={`${COLS} h-[20px] items-center border-b border-[#c8c8c8] text-[#111] ${bg}`}>
                <span className="flex h-full items-center gap-[7px] border-r border-[#c8c8c8] pl-[2px]"><DocIcon sell={sell} /><span className="pt-[2px]">{r[0]}</span></span>
                <span className={cellWide}>us30index</span>
                <span className={cell}>{r[1]}</span>
                <span className={cellWide}>{r[2]}</span>
                <span className={cell}>{r[3]}</span>
                <span className={cell}>{r[4]}</span>
                <span className={cell} />
                <span className={cell} />
                <span className={cell}>{r[5]}</span>
                <span className={cell}>{r[6]}</span>
                <span className={cell}>0.00</span>
                <span className={`${cell} ${pc}`}>{profit}</span>
              </div>
            );
          })}
          <div className={`${COLS} h-[20px] items-center bg-[#c4c4c4] text-[12px] font-bold text-[#111]`}>
            <span className="col-span-10 flex items-center gap-[7px] pl-[2px] whitespace-nowrap">
              <svg width="12" height="12" viewBox="0 0 12 12" fill="none" stroke="#333"><circle cx="6" cy="6" r="5.4" strokeWidth="1.2" /><path d="M6 3 V9 M3 6 H9" strokeWidth="1.6" /></svg>
              Profit: 257 944.86&nbsp; Credit: 0.00&nbsp; Deposit: 6 804.65&nbsp; Withdrawal: 0.00&nbsp; Balance: 264 749.51
            </span>
            <span className="pr-[4px] text-right">-4.91</span>
            <span className="pr-[4px] text-right">257 949.77</span>
          </div>
          <div className="h-[14px] bg-white" />
        </div>
        <div className="flex w-[16px] flex-col border-x border-[#d0d0d0] bg-[#f7f7f7]">
          <span className="flex h-[18px] items-center justify-center border-b border-[#d0d0d0] bg-white"><Chevron up /></span>
          <span className="flex-1" />
          <span className="h-[17px] bg-[#cdcdcd]" />
          <span className="flex h-[17px] items-center justify-center border-t border-[#d0d0d0] bg-white"><Chevron up={false} /></span>
        </div>
        <div className="flex-1 bg-white" />
      </div>
      <div className="flex h-[21px] shrink-0 items-start justify-between border-t border-black bg-[#f0f0f0] pl-[2px] text-[11.3px] text-[#777]">
        <div className="flex items-start">
          {toolboxTabs.map((t) =>
            t.active ? (
              <span key={t.t} className="flex h-[20px] items-center border-x border-b border-black bg-white px-[10px] text-[12px] text-[#111]">{t.t}</span>
            ) : (
              <span key={t.t} className={`mt-[3px] flex h-[14px] items-center px-[10px] ${t.noSep ? '' : 'border-r border-[#777]'}`}>
                {t.t}
                {t.sup && <span className="mt-[5px] pl-[1px] text-[10px] font-medium leading-none text-[#f01010]">{t.sup}</span>}
              </span>
            ),
          )}
        </div>
        <span className="mr-[24px] mt-[2px] text-[12px] text-[#111]">Strategy Tester</span>
      </div>
    </div>
  );
}

export default function App() {
  const marks = Array.from({ length: 20 }, (_, i) => i);
  const frames = ['M1', 'M5', 'M15', 'M30', 'H1', 'H4', 'D1', 'W1', 'MN'];
  return (
    <div className="relative flex h-[847px] w-[1599px] flex-col overflow-hidden bg-[#f0f0f0]" style={FONT}>
      <div className="h-[3px] shrink-0 bg-[#cbd7e6]" />

      {/* Title bar */}
      <div className="grid h-[23px] shrink-0 grid-cols-[1fr_auto_1fr] items-start bg-[#65c9ec]">
        <span className="mt-[2px] flex h-[17px] w-[12px] items-center overflow-hidden bg-[#2f5fa8] text-[10px] font-bold leading-none text-white">FX</span>
        <span className="mr-[14px] pt-[2px] text-[15.2px] leading-[19px] text-[#111]">38353 - FXChoice-MetaTrader 5 Pro - Hedge - [US30Index,M15]</span>
        <div className="flex justify-end pr-[7px]">
          <span className="flex h-[20px] w-[28px] items-center justify-center border border-[#2c3b44] border-t-0"><span className="mt-[4px] h-[3px] w-[10px] bg-black" /></span>
          <span className="flex h-[20px] w-[26px] items-center justify-center border-y border-r border-[#2c3b44] border-t-0">
            <svg width="10" height="10" viewBox="0 0 10 10" fill="none" stroke="#000" strokeWidth="1.6"><rect x="1" y="3" width="6" height="6" /><path d="M3 1 H9 V7" /></svg>
          </span>
          <span className="flex h-[20px] w-[46px] items-center justify-center border-y border-r border-[#4a2a28] border-t-0 bg-[#c25b50] text-[14px] font-bold leading-none text-black">X</span>
        </div>
      </div>

      {/* Menu bar */}
      <div className="flex h-[20px] shrink-0 items-center text-[12px] text-[#111]">
        <span className="ml-[1px] w-[25px]"><WindowIcon /></span>
        <div className="flex gap-[21.5px]">
          <span>File</span><span>View</span><span>Insert</span><span>Charts</span><span>Tools</span><span>Window</span><span>Help</span>
        </div>
        <div className="ml-auto flex items-center gap-[12px] pr-[12px]">
          <span className="mt-[4px] h-[3px] w-[8px] bg-[#c8c8c8]" />
          <span className="h-[8px] w-[8px] border-2 border-[#c8c8c8]" />
          <span className="text-[12px] font-bold leading-none text-[#c0c0c0]">x</span>
        </div>
      </div>

      <Toolbar />

      {/* Timeframes */}
      <div className="flex h-[32px] shrink-0 items-center border-b-2 border-[#a8a8a8] text-[12px] text-[#555]">
        <div className="flex h-full w-[290px] items-center border-r border-[#a8a8a8] pb-[2px] pl-[1px]">
          {frames.map((t, i) =>
            t === 'M15' ? (
              <span key={t} className="ml-[3px] flex h-[27px] w-[30px] items-center justify-center border border-[#3a9bd9] bg-[#e6f1fb]">{t}</span>
            ) : (
              <span key={t} className={`flex justify-center ${i < 2 ? 'w-[31px]' : 'w-[32px]'}`}>{t}</span>
            ),
          )}
        </div>
      </div>

      {/* Main area */}
      <div className="flex h-[408px] shrink-0">
        <div className="flex w-[327px] shrink-0 flex-col border-r-2 border-[#a8a8a8] pr-[3px]">
          <MarketWatch />
          <Navigator />
        </div>
        <div className="flex min-w-0 flex-1 flex-col">
          <Chart />
          <div className="flex h-[22px] shrink-0 items-start border-t border-black text-[12px]">
            <span className="flex h-[20px] w-[88px] items-center justify-center text-[#666]">EURUSD,M1</span>
            <span className="flex h-[20px] w-[104px] items-center justify-center border-x border-b border-black bg-white text-[#111]">US30Index,M15</span>
            <span className="ml-auto mr-[14px] flex items-center gap-[16px] pt-[4px]">
              <span className="h-0 w-0 border-y-[4px] border-r-[4px] border-y-transparent border-r-[#999]" />
              <span className="h-0 w-0 border-y-[4px] border-l-[4px] border-y-transparent border-l-[#999]" />
            </span>
          </div>
        </div>
      </div>

      {/* Toolbox */}
      <div className="mt-[2px] flex h-[318px] shrink-0 border-t-2 border-[#a8a8a8]">
        <div className="flex w-[10px] shrink-0 flex-col justify-between overflow-hidden pb-[4px]">
          <span className="text-[11px] font-bold leading-none text-black">x</span>
          <span className="whitespace-nowrap text-[11px] leading-[10px] text-[#111] [writing-mode:vertical-rl] rotate-180">Toolbox</span>
        </div>
        <HistoryTable />
      </div>

      <div className="flex-1 border-t-2 border-[#b0b0b0]" />

      {/* FX110 watermark */}
      <div className="pointer-events-none absolute inset-0 grid grid-cols-[repeat(5,317px)] auto-rows-[257px] pl-[2px] pt-[4px]">
        {marks.map((m) => (
          <Watermark key={m} />
        ))}
      </div>
    </div>
  );
}
